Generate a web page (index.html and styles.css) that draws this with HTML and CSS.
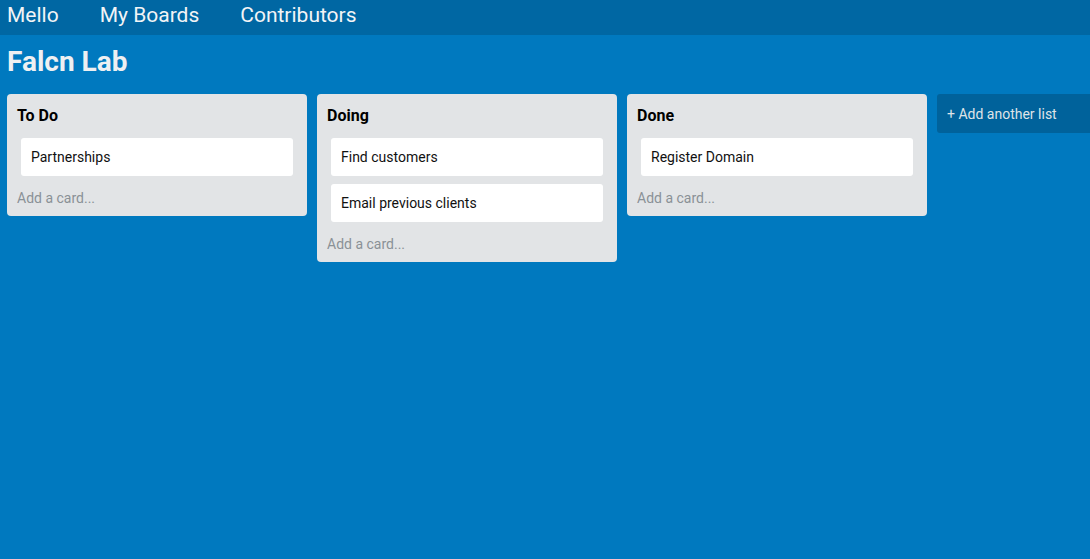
FILE: index.html
```html
<!DOCTYPE html>
<html>
<head>
<meta charset="utf-8">
<link rel="stylesheet" href="styles.css">
</head>
<body>
<nav class="topbar">
  <a class="nav-link">Mello</a>
  <a class="nav-link">My Boards</a>
  <a class="nav-link">Contributors</a>
</nav>
<main class="board">
  <h1 class="board-title">Falcn Lab</h1>
  <div class="lists">
    <section class="list">
      <h2 class="list-title">To Do</h2>
      <div class="cards">
        <div class="card">Partnerships</div>
      </div>
      <div class="add-card">Add a card...</div>
    </section>
    <section class="list">
      <h2 class="list-title">Doing</h2>
      <div class="cards">
        <div class="card">Find customers</div>
        <div class="card">Email previous clients</div>
      </div>
      <div class="add-card">Add a card...</div>
    </section>
    <section class="list">
      <h2 class="list-title">Done</h2>
      <div class="cards">
        <div class="card">Register Domain</div>
      </div>
      <div class="add-card">Add a card...</div>
    </section>
    <div class="add-list">+ Add another list</div>
  </div>
</main>
</body>
</html>
```
FILE: styles.css
```css
* { box-sizing: border-box; }
html, body {
  margin: 0;
  padding: 0;
  height: 100%;
}
body {
  background: #0079bf;
  font-family: Roboto, "Liberation Sans", sans-serif;
  overflow: hidden;
}
.topbar {
  height: 35px;
  background: #0067a3;
  display: flex;
  align-items: center;
  gap: 41px;
  padding: 0 8px 4px 7px;
}
.nav-link {
  color: #f2f4f6;
  font-size: 21px;
  line-height: 1;
}
.board {
  padding: 0 7px;
}
.board-title {
  margin: 0;
  padding-top: 11px;
  height: 59px;
  font-size: 28px;
  font-weight: 700;
  color: #eef0f2;
  line-height: 32px;
}
.lists {
  display: flex;
  align-items: flex-start;
  gap: 10px;
}
.list {
  width: 300px;
  flex: none;
  background: #e2e4e6;
  border-radius: 4px;
  padding: 12px 14px 9px 10px;
}
.list-title {
  margin: 0 0 13px;
  font-size: 16px;
  font-weight: 700;
  color: #000;
  line-height: 19px;
}
.cards {
  display: flex;
  flex-direction: column;
  gap: 8px;
  padding-left: 4px;
}
.card {
  background: #fff;
  border-radius: 3px;
  height: 38px;
  padding: 0 10px;
  display: flex;
  align-items: center;
  font-size: 14px;
  color: #111;
}
.add-card {
  margin-top: 13px;
  font-size: 14px;
  color: #8a9196;
  line-height: 18px;
}
.add-list {
  flex: none;
  width: 160px;
  margin-right: -20px;
  height: 39px;
  background: #00629b;
  border-radius: 3px 0 0 3px;
  color: #dfe4e8;
  font-size: 14px;
  padding: 0 10px;
  display: flex;
  align-items: center;
}
```
